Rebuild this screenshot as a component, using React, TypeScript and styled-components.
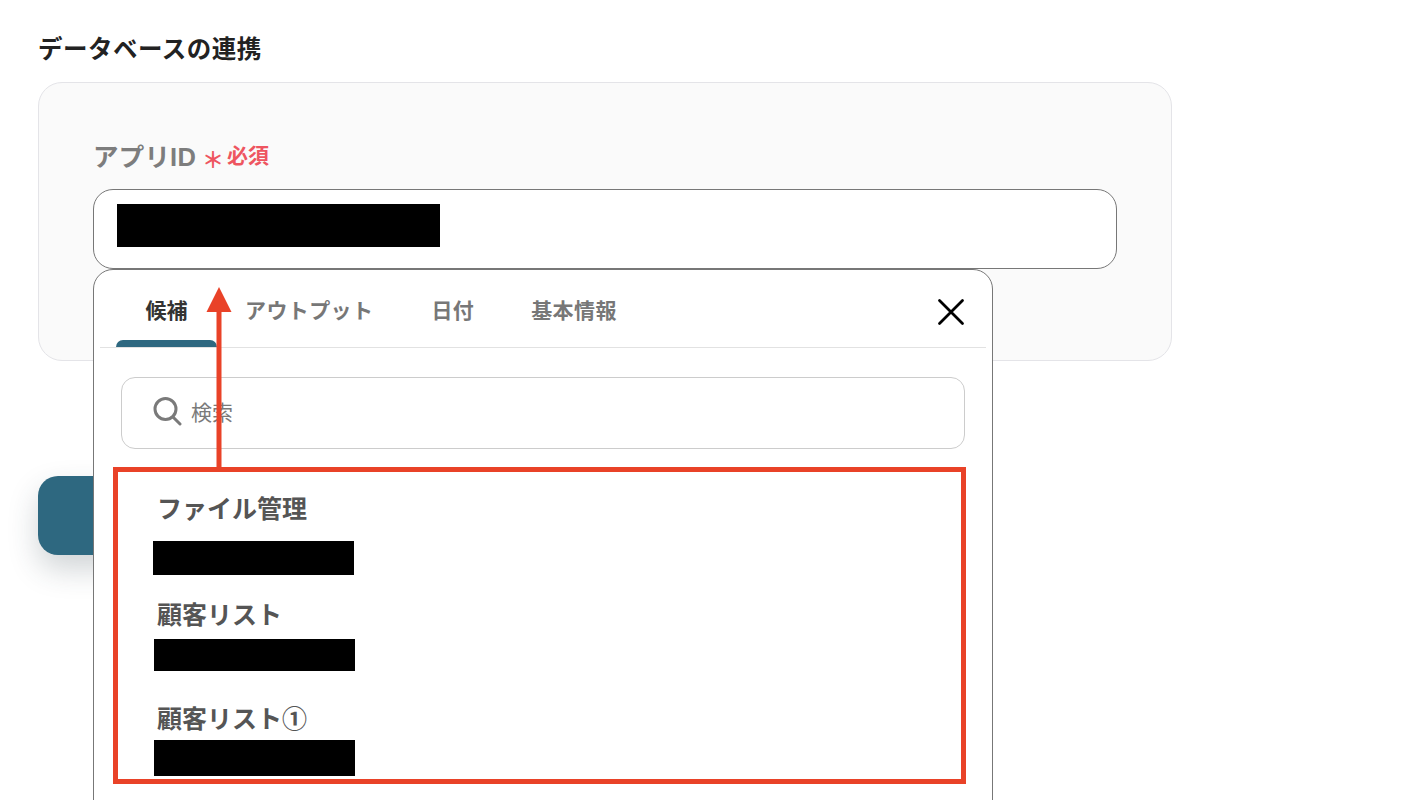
import React, { FC } from "react";
import styled, { createGlobalStyle } from "styled-components";

const tabs = [
  { label: "候補", gap: 14 },
  { label: "アウトプット", gap: 30 },
  { label: "日付", gap: 29 },
  { label: "基本情報", gap: 0 },
];

const records = [
  { name: "ファイル管理", nameGap: 15, left: 35, height: 34, after: 20 },
  { name: "顧客リスト", nameGap: 7, left: 36, height: 32, after: 28 },
  { name: "顧客リスト①", nameGap: 4, left: 36, height: 36, after: 0 },
];

// Page
const App: FC = () => {
  return (
    <>
      <GlobalStyle />
      <Page>
        <Title>データベースの連携</Title>
        <Panel>
          <FieldLabel>
            アプリID
            <Asterisk>＊</Asterisk>
            <Required>必須</Required>
          </FieldLabel>
          <FieldWrap>
            <Field>
              <Redaction $width={323} $height={43} />
            </Field>
            <Popup>
              <TabBar>
                {tabs.map((tab, i) => (
                  <Tab key={tab.label} $active={i === 0} $gap={tab.gap}>
                    {tab.label}
                  </Tab>
                ))}
                <CloseButton aria-label="close">
                  <svg width="28" height="28" viewBox="0 0 28 28" fill="none">
                    <path
                      d="M2.5 2.5 L25.5 25.5 M25.5 2.5 L2.5 25.5"
                      stroke="#000"
                      strokeWidth="2.8"
                      strokeLinecap="round"
                    />
                  </svg>
                </CloseButton>
              </TabBar>
              <SearchBox>
                <svg width="30" height="30" viewBox="0 0 30 30" fill="none">
                  <circle cx="13.5" cy="13" r="10.5" stroke="#7a7a7a" strokeWidth="3" />
                  <path d="M21 21 L28 28" stroke="#7a7a7a" strokeWidth="3" strokeLinecap="round" />
                </svg>
                <SearchText>検索</SearchText>
              </SearchBox>
              <Candidates>
                <Arrow viewBox="0 0 26 182" width="26" height="182">
                  <path d="M13 0 L25.5 25 L15.5 25 L15.5 182 L10.5 182 L10.5 25 L0.5 25 Z" fill="#e94228" />
                </Arrow>
                {records.map((r) => (
                  <Record key={r.name} $after={r.after}>
                    <RecordName $gap={r.nameGap}>{r.name}</RecordName>
                    <Redaction $width={201} $height={r.height} $left={r.left} />
                  </Record>
                ))}
              </Candidates>
            </Popup>
          </FieldWrap>
        </Panel>
        <SaveButton />
      </Page>
    </>
  );
};

// Style
const GlobalStyle = createGlobalStyle`
  html, body {
    margin: 0;
    padding: 0;
    background: #fff;
    overflow: hidden;
  }
`;

const Page = styled.div`
  width: 1422px;
  height: 800px;
  overflow: hidden;
  box-sizing: border-box;
  padding: 32px 0 0 38px;
  font-family: "Noto Sans CJK JP", "Liberation Sans", sans-serif;
`;

const Title = styled.h2`
  margin: 0 0 18px;
  font-size: 24.5px;
  line-height: 32px;
  font-weight: 700;
  letter-spacing: 0.5px;
  color: #222;
`;

const Panel = styled.section`
  box-sizing: border-box;
  width: 1134px;
  height: 279px;
  padding: 52px 54px 0;
  background: #fafafa;
  border: 1px solid #e4e4e8;
  border-radius: 24px;
`;

const FieldLabel = styled.div`
  display: flex;
  align-items: center;
  height: 38px;
  margin-bottom: 16px;
  font-family: "Liberation Sans", "Noto Sans CJK JP", sans-serif;
  font-size: 25.5px;
  font-weight: 700;
  letter-spacing: 0.2px;
  color: #7d7d7d;
`;

const Asterisk = styled.span`
  width: 22px;
  margin-left: 6px;
  margin-top: 14px;
  font-size: 22px;
  line-height: 1;
  color: #ee5560;
`;

const Required = styled.span`
  margin-left: 3px;
  font-size: 21px;
  letter-spacing: 0;
  color: #ee5560;
`;

const FieldWrap = styled.div`
  position: relative;
  width: 1024px;
`;

const Field = styled.div`
  box-sizing: border-box;
  height: 80px;
  padding: 14px 0 0 23px;
  background: #fff;
  border: 1px solid #777;
  border-radius: 20px;
`;

const Redaction = styled.div<{ $width: number; $height: number; $left?: number }>`
  width: ${(p) => p.$width}px;
  height: ${(p) => p.$height}px;
  margin-left: ${(p) => p.$left ?? 0}px;
  background: #000;
`;

const Popup = styled.div`
  position: absolute;
  top: 80px;
  left: 0;
  box-sizing: border-box;
  width: 900px;
  height: 600px;
  padding: 0 6px;
  background: #fff;
  border: 1px solid #777;
  border-radius: 20px;
`;

const TabBar = styled.div`
  position: relative;
  display: flex;
  height: 77px;
  padding-left: 16px;
  border-bottom: 1px solid #e2e2e2;
`;

const Tab = styled.div<{ $active: boolean; $gap: number }>`
  position: relative;
  box-sizing: border-box;
  padding: 22px 14px 0;
  min-width: ${(p) => (p.$active ? 101 : 0)}px;
  margin-right: ${(p) => p.$gap}px;
  text-align: center;
  font-size: 21px;
  line-height: 34px;
  font-weight: 700;
  letter-spacing: ${(p) => (p.$active ? 0 : 0.4)}px;
  color: ${(p) => (p.$active ? "#333" : "#777")};

  &::after {
    content: "";
    display: ${(p) => (p.$active ? "block" : "none")};
    position: absolute;
    left: 0;
    right: 0;
    bottom: 0;
    height: 7px;
    background: #2e6880;
    border-radius: 7px 7px 0 0;
  }
`;

const CloseButton = styled.button`
  position: absolute;
  top: 28px;
  right: 21px;
  width: 28px;
  height: 28px;
  padding: 0;
  border: 0;
  background: none;
`;

const SearchBox = styled.div`
  display: flex;
  align-items: center;
  box-sizing: border-box;
  width: 844px;
  height: 72px;
  margin: 29px 0 18px 21px;
  padding: 0 0 4px 30px;
  border: 1px solid #ccc;
  border-radius: 14px;
`;

const SearchText = styled.span`
  margin-left: 9px;
  font-size: 21px;
  color: #7a7a7a;
`;

const Candidates = styled.div`
  position: relative;
  box-sizing: border-box;
  width: 853px;
  height: 317px;
  margin-left: 13px;
  padding-top: 17px;
  border: 5px solid #e94228;
`;

const Arrow = styled.svg`
  position: absolute;
  top: -185px;
  left: 88px;
`;

const Record = styled.div<{ $after: number }>`
  margin-bottom: ${(p) => p.$after}px;
`;

const RecordName = styled.div<{ $gap: number }>`
  margin: 0 0 ${(p) => p.$gap}px 39px;
  font-size: 25px;
  line-height: 37px;
  font-weight: 700;
  color: #555;
`;

const SaveButton = styled.div`
  width: 200px;
  height: 79px;
  margin-top: 115px;
  background: #2e6880;
  border-radius: 20px;
  box-shadow: 0 14px 30px rgba(40, 60, 70, 0.22);
`;

export default App;
